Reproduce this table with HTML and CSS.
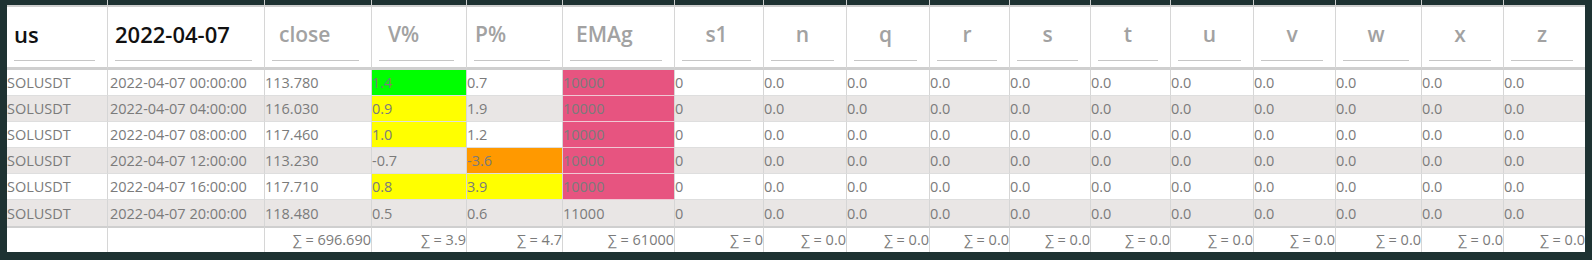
FILE: index.html
```html
<!DOCTYPE html>
<html>
<head>
<meta charset="utf-8">
<link rel="stylesheet" href="styles.css">
</head>
<body>
<div class="frame">
<table class="grid">
<colgroup>
<col class="w101"><col class="w157"><col class="w107"><col class="w95"><col class="w96"><col class="w112"><col class="w89"><col class="w83"><col class="w83"><col class="w80"><col class="w81"><col class="w80"><col class="w83"><col class="w82"><col class="w86"><col class="w82"><col class="w82">
</colgroup>
<thead>
<tr class="cap"><th></th><th></th><th></th><th></th><th></th><th></th><th></th><th></th><th></th><th></th><th></th><th></th><th></th><th></th><th></th><th></th><th></th></tr>
<tr class="head">
<th><div class="hdr dark">us</div></th>
<th><div class="hdr dark">2022-04-07</div></th>
<th><div class="hdr pl7">close</div></th>
<th><div class="hdr pl9">V%</div></th>
<th><div class="hdr pl2">P%</div></th>
<th><div class="hdr pl6">EMAg</div></th>
<th><div class="hdr ctr">s1</div></th>
<th><div class="hdr ctr">n</div></th>
<th><div class="hdr ctr">q</div></th>
<th><div class="hdr ctr">r</div></th>
<th><div class="hdr ctr">s</div></th>
<th><div class="hdr ctr">t</div></th>
<th><div class="hdr ctr">u</div></th>
<th><div class="hdr ctr">v</div></th>
<th><div class="hdr ctr">w</div></th>
<th><div class="hdr ctr">x</div></th>
<th><div class="hdr ctr">z</div></th>
</tr>
</thead>
<tbody>
<tr><td>SOLUSDT</td><td>2022-04-07 00:00:00</td><td>113.780</td><td class="green">1.4</td><td>0.7</td><td class="pink">10000</td><td>0</td><td>0.0</td><td>0.0</td><td>0.0</td><td>0.0</td><td>0.0</td><td>0.0</td><td>0.0</td><td>0.0</td><td>0.0</td><td>0.0</td></tr>
<tr class="alt"><td>SOLUSDT</td><td>2022-04-07 04:00:00</td><td>116.030</td><td class="yellow">0.9</td><td>1.9</td><td class="pink">10000</td><td>0</td><td>0.0</td><td>0.0</td><td>0.0</td><td>0.0</td><td>0.0</td><td>0.0</td><td>0.0</td><td>0.0</td><td>0.0</td><td>0.0</td></tr>
<tr><td>SOLUSDT</td><td>2022-04-07 08:00:00</td><td>117.460</td><td class="yellow">1.0</td><td>1.2</td><td class="pink">10000</td><td>0</td><td>0.0</td><td>0.0</td><td>0.0</td><td>0.0</td><td>0.0</td><td>0.0</td><td>0.0</td><td>0.0</td><td>0.0</td><td>0.0</td></tr>
<tr class="alt"><td>SOLUSDT</td><td>2022-04-07 12:00:00</td><td>113.230</td><td>-0.7</td><td class="orange">-3.6</td><td class="pink">10000</td><td>0</td><td>0.0</td><td>0.0</td><td>0.0</td><td>0.0</td><td>0.0</td><td>0.0</td><td>0.0</td><td>0.0</td><td>0.0</td><td>0.0</td></tr>
<tr><td>SOLUSDT</td><td>2022-04-07 16:00:00</td><td>117.710</td><td class="yellow">0.8</td><td class="yellow">3.9</td><td class="pink">10000</td><td>0</td><td>0.0</td><td>0.0</td><td>0.0</td><td>0.0</td><td>0.0</td><td>0.0</td><td>0.0</td><td>0.0</td><td>0.0</td><td>0.0</td></tr>
<tr class="alt"><td>SOLUSDT</td><td>2022-04-07 20:00:00</td><td>118.480</td><td>0.5</td><td>0.6</td><td>11000</td><td>0</td><td>0.0</td><td>0.0</td><td>0.0</td><td>0.0</td><td>0.0</td><td>0.0</td><td>0.0</td><td>0.0</td><td>0.0</td><td>0.0</td></tr>
</tbody>
<tfoot>
<tr><td></td><td></td><td>∑ = 696.690</td><td>∑ = 3.9</td><td>∑ = 4.7</td><td>∑ = 61000</td><td>∑ = 0</td><td>∑ = 0.0</td><td>∑ = 0.0</td><td>∑ = 0.0</td><td>∑ = 0.0</td><td>∑ = 0.0</td><td>∑ = 0.0</td><td>∑ = 0.0</td><td>∑ = 0.0</td><td>∑ = 0.0</td><td>∑ = 0.0</td></tr>
</tfoot>
</table>
</div>
</body>
</html>
```
FILE: styles.css
```css
html, body {
  margin: 0;
  padding: 0;
  background: #1e3232;
  height: 260px;
  overflow: hidden;
}
.frame {
  margin-left: 7px;
  width: 1578px;
  overflow: hidden;
}
.grid {
  table-layout: fixed;
  width: 1579px;
  border-collapse: separate;
  border-spacing: 0;
  font-family: "Open Sans", "DejaVu Sans", sans-serif;
  font-size: 14.5px;
  color: #7b7b7b;
}
.w101 { width: 101px; }
.w157 { width: 157px; }
.w107 { width: 107px; }
.w95 { width: 95px; }
.w96 { width: 96px; }
.w112 { width: 112px; }
.w89 { width: 89px; }
.w83 { width: 83px; }
.w80 { width: 80px; }
.w81 { width: 81px; }
.w82 { width: 82px; }
.w86 { width: 86px; }

.grid th, .grid td {
  padding: 0;
  border-right: 1px solid #d6d6d6;
  white-space: nowrap;
  overflow: hidden;
  box-sizing: border-box;
}

.cap th {
  height: 5px;
  background: #1e3232;
  border-right: 1px solid #c9cccc;
}
.head th {
  background: #fff;
  border-top: 2px solid #cfcfcf;
  border-bottom: 3px solid #cfcfcf;
  padding: 0 0 6px 0;
  text-align: left;
  vertical-align: top;
}
.hdr {
  margin: 0 12px 0 7px;
  padding: 12px 0 11px 0;
  line-height: 30px;
  height: 30px;
  border-bottom: 1px solid #c6c6c6;
  font-size: 21px;
  font-weight: 600;
  color: #a2a2a2;
}
.hdr.dark { color: #111; padding-left: 0; font-size: 22px; }
.hdr.ctr { text-align: center; }
.pl7 { padding-left: 7px; }
.pl9 { padding-left: 9px; }
.pl2 { padding-left: 1px; }
.pl6 { padding-left: 6px; }

tbody td {
  height: 26px;
  line-height: 25px;
  padding-left: 1px;
  border-bottom: 1px solid #dedede;
  background: #fff;
}
tbody tr.alt td { background: #e9e6e5; }
tbody tr td.green { background: #00ff00; }
tbody tr td.yellow { background: #ffff00; }
tbody tr td.orange { background: #ff9900; }
tbody tr td.pink { background: #e75480; border-bottom-color: #f0c8d4; }
tbody tr:last-child td { border-bottom: 0; }
tbody td:nth-child(2) { padding-left: 2px; }

tfoot td {
  height: 26px;
  line-height: 24px;
  border-top: 2px solid #cfcfcf;
  background: #fff;
  text-align: right;
  padding-right: 1px;
}
```
